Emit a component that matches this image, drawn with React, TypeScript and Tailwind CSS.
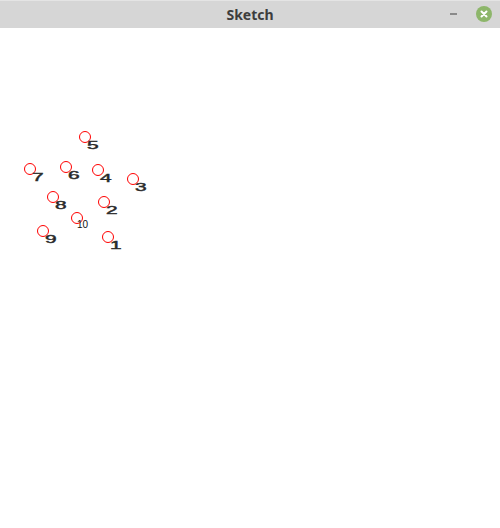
import React from "react";

const points: { n: string; x: number; y: number }[] = [
  { n: "1", x: 108, y: 237 },
  { n: "2", x: 104, y: 202 },
  { n: "3", x: 133, y: 179 },
  { n: "4", x: 98, y: 170 },
  { n: "5", x: 85, y: 137 },
  { n: "6", x: 66, y: 167 },
  { n: "7", x: 30, y: 169 },
  { n: "8", x: 53, y: 197 },
  { n: "9", x: 43, y: 231 },
];

const OFF = 28;

export default function App() {
  return (
    <div className="w-[500px] h-[528px] bg-white flex flex-col overflow-hidden">
      <div className="h-[28px] bg-[#d6d6d6] border-t border-[#e4e4e4] flex items-center relative shrink-0">
        <div className="flex-1 text-center text-[14px] font-bold text-[#3d3d3d] [font-family:'Noto_Sans',sans-serif] leading-none pt-[1px]">
          Sketch
        </div>
        <div className="absolute right-[8px] top-[5px] flex items-center gap-[19px]">
          <div className="w-[7px] h-[2px] bg-[#8a8a8a]" />
          <div className="w-[16px] h-[16px] rounded-full bg-[#8db66a] flex items-center justify-center">
            <svg width="8" height="8" viewBox="0 0 8 8">
              <path d="M1.5 1.5 L6.5 6.5 M6.5 1.5 L1.5 6.5" stroke="white" strokeWidth="2" strokeLinecap="round" />
            </svg>
          </div>
        </div>
      </div>
      <svg width="500" height="500" className="block">
        {points.map((p) => (
          <g key={p.n}>
            <circle cx={p.x} cy={p.y - OFF} r={5.5} fill="none" stroke="#ff0000" strokeWidth={1} />
            <text
              transform={`translate(${p.x + 2}, ${p.y - OFF + 12}) scale(1.9, 0.95)`}
              fontFamily="Liberation Sans, Arial, sans-serif"
              fontSize={11}
              fill="#222"
              stroke="#333"
              strokeWidth={0.45}
            >
              {p.n}
            </text>
          </g>
        ))}
        <circle cx={77} cy={218 - OFF} r={5.5} fill="none" stroke="#ff0000" strokeWidth={1} />
        <text x={77} y={228 - OFF} fontFamily="Liberation Sans, Arial, sans-serif" fontSize={10} fill="#111">
          10
        </text>
      </svg>
    </div>
  );
}
